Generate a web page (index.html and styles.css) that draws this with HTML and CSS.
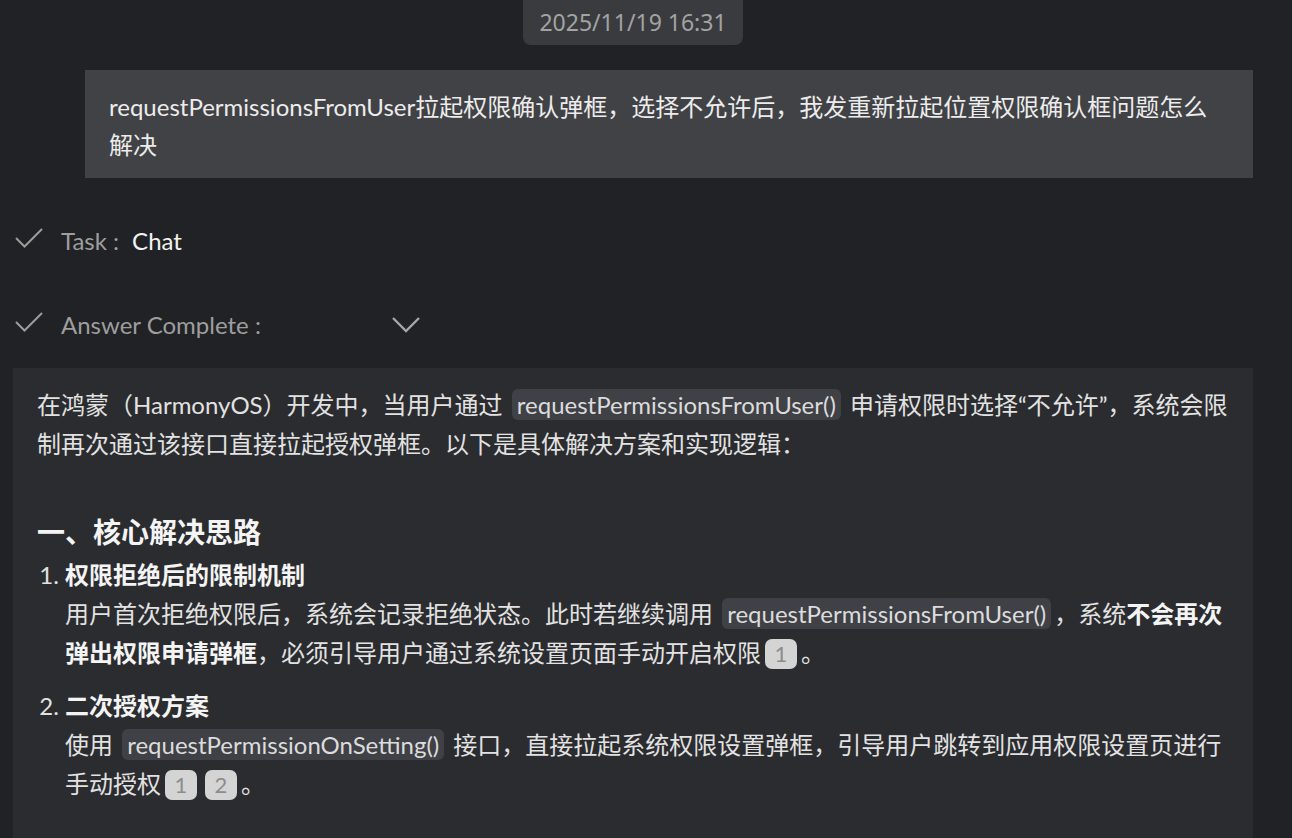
FILE: index.html
```html
<!DOCTYPE html>
<html lang="zh-CN">

<head>
    <meta charset="UTF-8">
    <title>Chat</title>
    <link rel="stylesheet" href="styles.css">
</head>

<body>
    <div class="chat">
        <div class="time-row">
            <span class="time">2025/11/19 16:31</span>
        </div>
        <div class="question">requestPermissionsFromUser拉起权限确认弹框，选择不允许后，我发重新拉起位置权限确认框问题怎么解决</div>
        <div class="status">
            <svg class="check" width="28" height="20" viewBox="0 0 28 20">
                <polyline points="1,10 9.5,18.5 27,1" fill="none" stroke="#9c9c9c" stroke-width="2" />
            </svg>
            <span class="label">Task :</span>
            <span class="value">Chat</span>
        </div>
        <div class="status">
            <svg class="check" width="28" height="20" viewBox="0 0 28 20">
                <polyline points="1,10 9.5,18.5 27,1" fill="none" stroke="#9c9c9c" stroke-width="2" />
            </svg>
            <span class="label">Answer Complete :</span>
            <svg class="chevron" width="28" height="18" viewBox="0 0 28 18">
                <polyline points="1,3 14,16 27,3" fill="none" stroke="#a6a6a6" stroke-width="2.4" />
            </svg>
        </div>
        <div class="answer">
            <p>在鸿蒙（HarmonyOS）开发中，当用户通过 <code class="code">requestPermissionsFromUser()</code> 申请权限时选择“不允许”，系统会限制再次通过该接口直接拉起授权弹框。以下是具体解决方案和实现逻辑：</p>
            <h3 class="title">一、核心解决思路</h3>
            <ol class="steps">
                <li>
                    <strong>权限拒绝后的限制机制</strong>
                    <p>用户首次拒绝权限后，系统会记录拒绝状态。此时若继续调用 <code class="code">requestPermissionsFromUser()</code>，系统<strong>不会再次弹出权限申请弹框</strong>，必须引导用户通过系统设置页面手动开启权限<span class="cite">1</span>。</p>
                </li>
                <li>
                    <strong>二次授权方案</strong>
                    <p>使用 <code class="code">requestPermissionOnSetting()</code> 接口，直接拉起系统权限设置弹框，引导用户跳转到应用权限设置页进行手动授权<span class="cite">1</span><span class="cite">2</span>。</p>
                </li>
            </ol>
        </div>
    </div>
</body>

</html>
```

FILE: styles.css
```css
* {
    box-sizing: border-box;
}

body {
    margin: 0;
    background: #212225;
    color: #e2e2e2;
    font-family: Lato, "Noto Sans CJK SC", sans-serif;
    font-size: 24px;
    overflow: hidden;
}

.chat {
    width: 1240px;
    margin-left: 13px;
}

.time-row {
    display: flex;
    justify-content: center;
}

.time {
    height: 45px;
    line-height: 45px;
    padding: 0 16px;
    background: #3a3b3e;
    border-radius: 0 0 8px 8px;
    color: #a3a3a3;
    font-family: "Noto Sans", sans-serif;
    font-size: 23px;
}

.question {
    margin: 25px 0 0 72px;
    padding: 18px 24px 14px;
    background: #414245;
    color: #ececec;
    line-height: 38px;
}

.status {
    display: flex;
    align-items: center;
    height: 44px;
    margin-top: 40px;
    padding-left: 2px;
}

.status:first-of-type {
    margin-top: 42px;
}

.check {
    margin-right: 18px;
    margin-top: -5px;
}

.label {
    color: #9e9e9e;
}

.value {
    margin-left: 13px;
    color: #f2f2f2;
}

.chevron {
    margin-left: 131px;
}

.answer {
    margin-top: 22px;
    padding: 17px 17px 80px 24px;
    background: #2b2c2f;
    line-height: 39px;
}

.answer p {
    margin: 0;
}

.title {
    margin: 50px 0 0;
    font-size: 28px;
    line-height: 39px;
    color: #f4f4f4;
}

.steps {
    margin: 3px 0 0;
    padding-left: 28px;
}

.steps li + li {
    margin-top: 14px;
}

strong {
    color: #f4f4f4;
}

.code {
    display: inline-block;
    margin: 0 3px;
    padding: 0 5px;
    line-height: 31px;
    background: #404146;
    border-radius: 6px;
    font-family: inherit;
    color: #dcdcdc;
}

.cite {
    display: inline-block;
    min-width: 32px;
    height: 30px;
    line-height: 30px;
    margin: 0 4px;
    background: #d4d4d4;
    border-radius: 7px;
    color: #8c8c8c;
    font-size: 22px;
    text-align: center;
}
```
